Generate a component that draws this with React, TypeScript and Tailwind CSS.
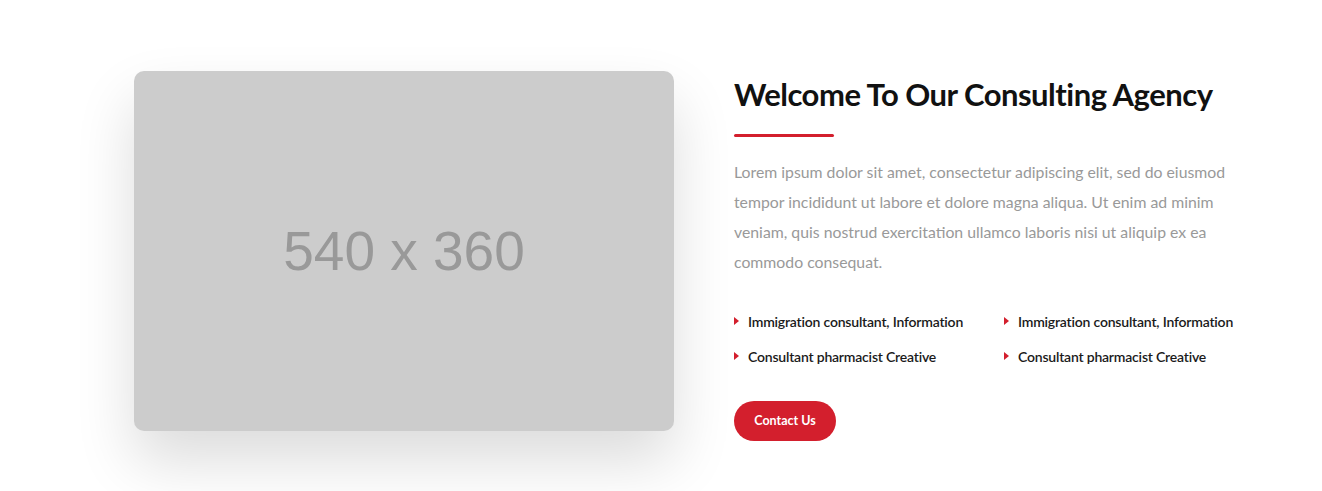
const features = [
  "Immigration consultant, Information",
  "Immigration consultant, Information",
  "Consultant pharmacist Creative",
  "Consultant pharmacist Creative",
];

function Caret() {
  return (
    <svg width="5" height="8" viewBox="0 0 5 8" className="shrink-0">
      <path d="M0 0 L5 4 L0 8 Z" fill="#d31f2d" />
    </svg>
  );
}

export default function App() {
  return (
    <div className="w-full h-[491px] bg-white overflow-hidden font-['Lato','Noto_Sans',sans-serif]">
      <div className="flex gap-[60px] pt-[71px] pl-[134px]">
        {/* placeholder image */}
        <div className="w-[540px] h-[360px] shrink-0 rounded-[10px] bg-[#cccccc] shadow-[0_30px_60px_rgba(0,0,0,0.14)] flex items-center justify-center">
          <span className="font-['Liberation_Sans',Arial,sans-serif] text-[55px] text-[#999999] leading-none">
            540 x 360
          </span>
        </div>

        <div className="w-[540px] pt-[4px]">
          <h2 className="text-[31px] leading-[38px] font-bold tracking-[-0.5px] text-[#111111]">
            Welcome To Our Consulting Agency
          </h2>
          <div className="mt-[21px] w-[100px] h-[3px] rounded-full bg-[#d31f2d]" />

          <p className="mt-[20px] text-[15.8px] leading-[30px] text-[#999999]">
            Lorem ipsum dolor sit amet, consectetur adipiscing elit, sed do eiusmod
            <br />
            tempor incididunt ut labore et dolore magna aliqua. Ut enim ad minim
            <br />
            veniam, quis nostrud exercitation ullamco laboris nisi ut aliquip ex ea
            <br />
            commodo consequat.
          </p>

          <ul className="mt-[34px] grid grid-cols-2 gap-y-[15px]">
            {features.map((f, i) => (
              <li key={i} className="flex items-center gap-[9px] h-[20px]">
                <Caret />
                <span className="text-[14px] font-semibold tracking-[-0.2px] text-[#1a1a1a] whitespace-nowrap">{f}</span>
              </li>
            ))}
          </ul>

          <button className="mt-[35px] w-[102px] h-[40px] rounded-full bg-[#d31f2d] text-white text-[12.5px] font-bold">
            Contact Us
          </button>
        </div>
      </div>
    </div>
  );
}
